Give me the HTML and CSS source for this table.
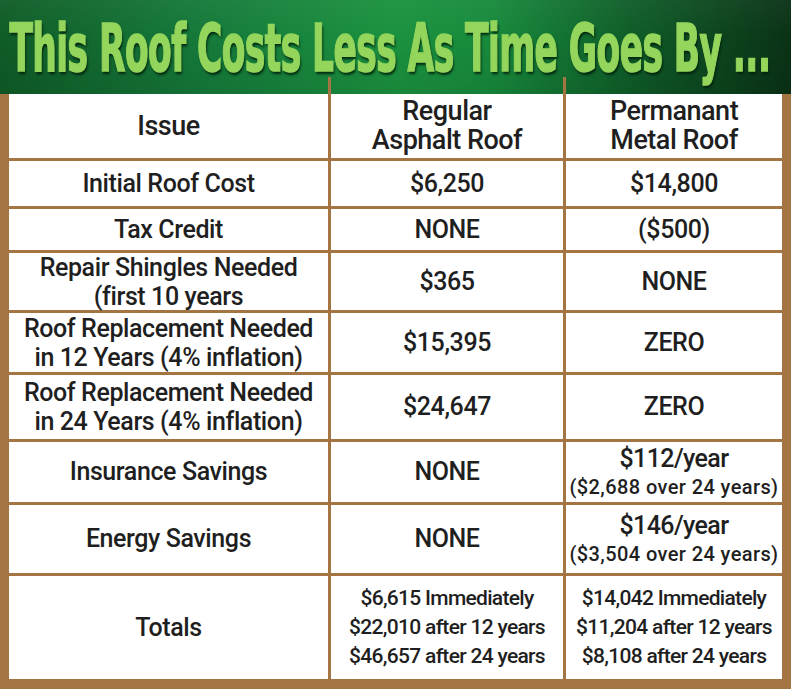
FILE: index.html
```html
<!DOCTYPE html>
<html>
<head>
<meta charset="utf-8">
<link rel="stylesheet" href="styles.css">
</head>
<body>
<div class="poster">
  <div class="banner">
    <div class="title-row"><h1 class="title">This Roof Costs Less As Time Goes By ...</h1></div>
    <div class="ticks"><span></span><span class="tick"></span><span></span><span class="tick"></span><span></span></div>
  </div>
  <div class="grid">
    <div class="cell r-head">Issue</div>
    <div class="cell r-head two">Regular<br>Asphalt Roof</div>
    <div class="cell r-head two">Permanant<br>Metal Roof</div>

    <div class="cell">Initial Roof Cost</div>
    <div class="cell">$6,250</div>
    <div class="cell">$14,800</div>

    <div class="cell">Tax Credit</div>
    <div class="cell">NONE</div>
    <div class="cell">($500)</div>

    <div class="cell two">Repair Shingles Needed<br>(first 10 years</div>
    <div class="cell">$365</div>
    <div class="cell">NONE</div>

    <div class="cell two">Roof Replacement Needed<br>in 12 Years (4% inflation)</div>
    <div class="cell">$15,395</div>
    <div class="cell">ZERO</div>

    <div class="cell two">Roof Replacement Needed<br>in 24 Years (4% inflation)</div>
    <div class="cell">$24,647</div>
    <div class="cell">ZERO</div>

    <div class="cell">Insurance Savings</div>
    <div class="cell">NONE</div>
    <div class="cell stack"><span class="big">$112/year</span><span class="small">($2,688 over 24 years)</span></div>

    <div class="cell">Energy Savings</div>
    <div class="cell">NONE</div>
    <div class="cell stack"><span class="big">$146/year</span><span class="small">($3,504 over 24 years)</span></div>

    <div class="cell">Totals</div>
    <div class="cell totals">$6,615 Immediately<br>$22,010 after 12 years<br>$46,657 after 24 years</div>
    <div class="cell totals">$14,042 Immediately<br>$11,204 after 12 years<br>$8,108 after 24 years</div>
  </div>
</div>
</body>
</html>
```

FILE: styles.css
```css
html, body {
  margin: 0;
  padding: 0;
  background: #ffffff;
}

.poster {
  width: 791px;
  height: 689px;
  overflow: hidden;
}

.banner {
  height: 94px;
  display: flex;
  flex-direction: column;
  background:
    linear-gradient(to bottom, rgba(255,255,255,0.04) 0%, rgba(0,0,0,0) 40%, rgba(0,0,0,0.08) 100%),
    linear-gradient(to right, #0f5c27 0%, #15793a 25%, #1b923f 50%, #178a3c 62%, #0f5c28 80%, #0a3216 100%);
  padding: 0 9px;
  box-sizing: border-box;
}

.title-row {
  height: 77px;
  display: flex;
  align-items: flex-end;
  justify-content: center;
}

.title {
  margin: 0 0 0 -11px;
  font-family: "DejaVu Sans Condensed", "DejaVu Sans", sans-serif;
  font-weight: bold;
  font-size: 65px;
  line-height: 56px;
  letter-spacing: -1px;
  color: #94d65c;
  white-space: nowrap;
  transform: scaleX(0.59);
  transform-origin: center bottom;
  -webkit-text-stroke: 1.5px #94d65c;
  text-shadow: 2px 3px 3px rgba(0, 30, 10, 0.85);
}

.ticks {
  height: 17px;
  display: grid;
  grid-template-columns: 319px 3px 232px 3px 216px;
}

.tick {
  background: #a47543;
}

.grid {
  display: grid;
  grid-template-columns: 319px 232px 216px;
  grid-template-rows: 64px 45px 41px 57px 59px 64px 60px 68px 103px;
  gap: 3px;
  padding: 0 9px 10px 9px;
  background: #a47543;
  height: 595px;
  box-sizing: border-box;
}

.cell {
  background: #ffffff;
  display: flex;
  flex-direction: column;
  align-items: center;
  justify-content: center;
  text-align: center;
  font-family: Roboto, "Liberation Sans", sans-serif;
  font-weight: 500;
  font-size: 25px;
  line-height: 28px;
  letter-spacing: -0.4px;
  color: #1f1f1f;
}

.cell.two {
  line-height: 29px;
}

.r-head {
  padding-top: 0;
  font-size: 27px;
  letter-spacing: -0.5px;
}

.stack .big {
  font-size: 25px;
  letter-spacing: -0.6px;
  line-height: 30px;
}

.stack .small {
  font-size: 20px;
  line-height: 26px;
  letter-spacing: 0.4px;
}

.totals {
  font-size: 21px;
  line-height: 29px;
  letter-spacing: -0.7px;
}
```
